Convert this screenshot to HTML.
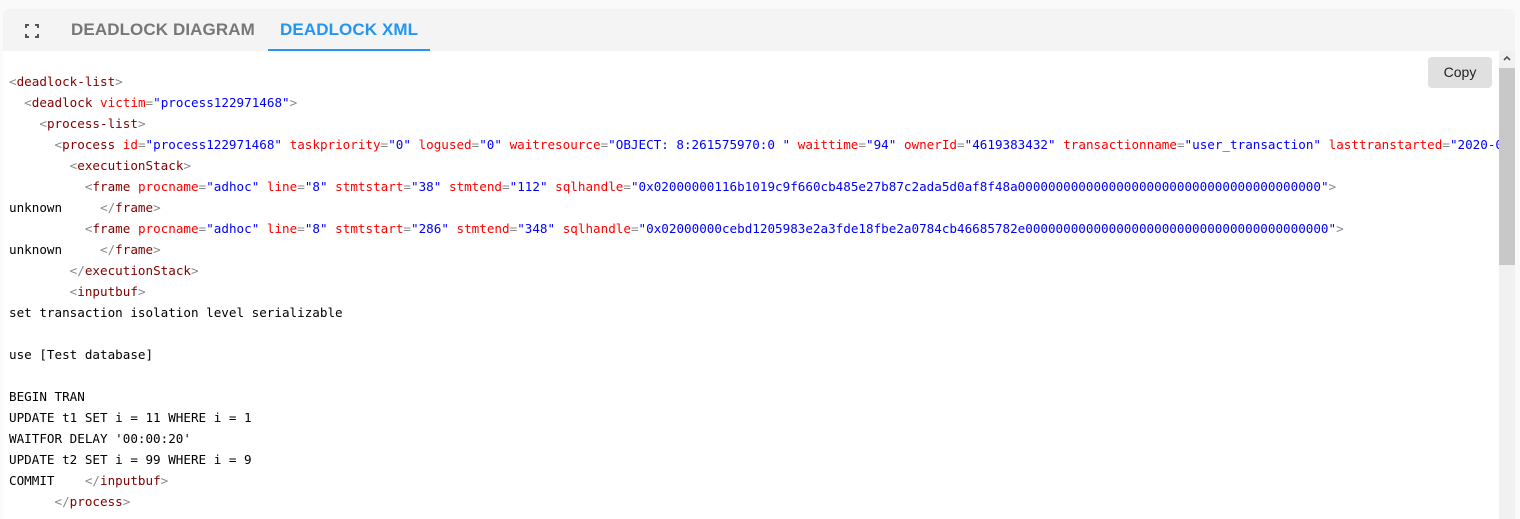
<!DOCTYPE html>
<html><head><meta charset="utf-8"><style>
html,body{margin:0;padding:0;background:#fafafa;width:1520px;height:513px;overflow:hidden}
.card{position:absolute;left:3px;top:9px;width:1512px;height:510px;background:#fff;border-radius:6px 6px 0 0;overflow:hidden}
.hdr{position:absolute;left:0;top:0;width:1512px;height:42px;background:#f4f4f4}
.tab{position:absolute;top:11px;font:bold 17px "Liberation Sans",sans-serif;color:#777;letter-spacing:0.1px}
.ul{position:absolute;left:265px;top:40px;width:162px;height:2px;background:#2196f3}
pre{position:absolute;left:6px;top:62px;margin:0;font:12.6px/21px "DejaVu Sans Mono",monospace;color:#000;white-space:pre}
.b{color:#888}.t{color:#800000}.a{color:#f00}.v{color:#00f}
.copy{position:absolute;left:1425px;top:48px;width:64px;height:31px;background:#e0e0e0;border-radius:4px;font:14px "Liberation Sans",sans-serif;color:#222;text-align:center;line-height:31px}
.sb{position:absolute;left:1496px;top:42px;width:16px;height:470px;background:#f1f1f1}
.th{position:absolute;left:1496px;top:59px;width:16px;height:197px;background:#c8c8c8}
</style></head><body>
<div class="card">
<div class="hdr"></div>
<svg style="position:absolute;left:22px;top:15px" width="14" height="14" viewBox="0 0 14 14" fill="none" stroke="#555" stroke-width="2"><path d="M1 4V1h3M10 1h3v3M13 10v3h-3M4 13H1v-3"/></svg>
<div class="tab" style="left:68px">DEADLOCK DIAGRAM</div>
<div class="tab" style="left:277px;color:#2196f3">DEADLOCK XML</div>
<div class="ul"></div>
<pre><span class="b">&lt;</span><span class="t">deadlock-list</span><span class="b">&gt;</span>
  <span class="b">&lt;</span><span class="t">deadlock</span> <span class="a">victim</span><span class="b">=</span><span class="v">"process122971468"</span><span class="b">&gt;</span>
    <span class="b">&lt;</span><span class="t">process-list</span><span class="b">&gt;</span>
      <span class="b">&lt;</span><span class="t">process</span> <span class="a">id</span><span class="b">=</span><span class="v">"process122971468"</span> <span class="a">taskpriority</span><span class="b">=</span><span class="v">"0"</span> <span class="a">logused</span><span class="b">=</span><span class="v">"0"</span> <span class="a">waitresource</span><span class="b">=</span><span class="v">"OBJECT: 8:261575970:0 "</span> <span class="a">waittime</span><span class="b">=</span><span class="v">"94"</span> <span class="a">ownerId</span><span class="b">=</span><span class="v">"4619383432"</span> <span class="a">transactionname</span><span class="b">=</span><span class="v">"user_transaction"</span> <span class="a">lasttranstarted</span><span class="b">=</span><span class="v">"2020-01-01T00:00:00"</span>
        <span class="b">&lt;</span><span class="t">executionStack</span><span class="b">&gt;</span>
          <span class="b">&lt;</span><span class="t">frame</span> <span class="a">procname</span><span class="b">=</span><span class="v">"adhoc"</span> <span class="a">line</span><span class="b">=</span><span class="v">"8"</span> <span class="a">stmtstart</span><span class="b">=</span><span class="v">"38"</span> <span class="a">stmtend</span><span class="b">=</span><span class="v">"112"</span> <span class="a">sqlhandle</span><span class="b">=</span><span class="v">"0x02000000116b1019c9f660cb485e27b87c2ada5d0af8f48a0000000000000000000000000000000000000000"</span><span class="b">&gt;</span>
unknown     <span class="b">&lt;/</span><span class="t">frame</span><span class="b">&gt;</span>
          <span class="b">&lt;</span><span class="t">frame</span> <span class="a">procname</span><span class="b">=</span><span class="v">"adhoc"</span> <span class="a">line</span><span class="b">=</span><span class="v">"8"</span> <span class="a">stmtstart</span><span class="b">=</span><span class="v">"286"</span> <span class="a">stmtend</span><span class="b">=</span><span class="v">"348"</span> <span class="a">sqlhandle</span><span class="b">=</span><span class="v">"0x02000000cebd1205983e2a3fde18fbe2a0784cb46685782e0000000000000000000000000000000000000000"</span><span class="b">&gt;</span>
unknown     <span class="b">&lt;/</span><span class="t">frame</span><span class="b">&gt;</span>
        <span class="b">&lt;/</span><span class="t">executionStack</span><span class="b">&gt;</span>
        <span class="b">&lt;</span><span class="t">inputbuf</span><span class="b">&gt;</span>
set transaction isolation level serializable

use [Test database]

BEGIN TRAN
UPDATE t1 SET i = 11 WHERE i = 1
WAITFOR DELAY '00:00:20'
UPDATE t2 SET i = 99 WHERE i = 9
COMMIT    <span class="b">&lt;/</span><span class="t">inputbuf</span><span class="b">&gt;</span>
      <span class="b">&lt;/</span><span class="t">process</span><span class="b">&gt;</span>
</pre>
<div class="sb"></div>
<svg style="position:absolute;left:1500px;top:46px" width="8" height="6" viewBox="0 0 8 6"><path d="M1 5L4 2L7 5" stroke="#555" stroke-width="1.6" fill="none"/></svg>
<div class="th"></div>
<div class="copy">Copy</div>
</div>
</body></html>
